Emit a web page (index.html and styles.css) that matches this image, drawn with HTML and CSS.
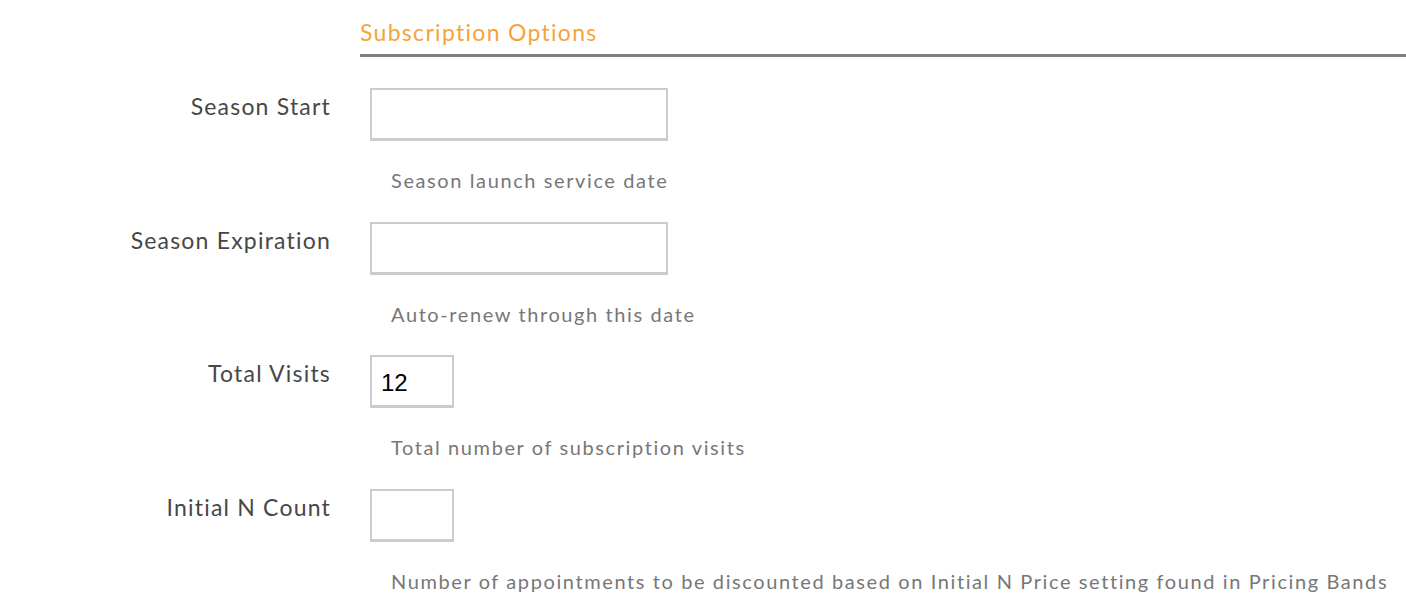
FILE: index.html
```html
<!DOCTYPE html>
<html lang="en">
<head>
<meta charset="utf-8">
<title>Subscription Options</title>
<link rel="stylesheet" href="styles.css">
</head>
<body>
<section class="section">
  <h2 class="section-title">Subscription Options</h2>
  <div class="form">
    <div class="row">
      <label class="label" for="start">Season Start</label>
      <div class="field">
        <input class="input wide" id="start" type="text">
        <p class="help">Season launch service date</p>
      </div>
    </div>
    <div class="row">
      <label class="label" for="exp">Season Expiration</label>
      <div class="field">
        <input class="input wide" id="exp" type="text">
        <p class="help">Auto-renew through this date</p>
      </div>
    </div>
    <div class="row">
      <label class="label" for="visits">Total Visits</label>
      <div class="field">
        <input class="input narrow" id="visits" type="text" value="12">
        <p class="help">Total number of subscription visits</p>
      </div>
    </div>
    <div class="row">
      <label class="label" for="ncount">Initial N Count</label>
      <div class="field">
        <input class="input narrow" id="ncount" type="text">
        <p class="help">Number of appointments to be discounted based on Initial N Price setting found in Pricing Bands</p>
      </div>
    </div>
  </div>
</section>
</body>
</html>
```
FILE: styles.css
```css
html, body {
  margin: 0;
  padding: 0;
  background: #ffffff;
}
body {
  font-family: "Lato", "Noto Sans", sans-serif;
  color: #4a4a4a;
}
.section {
  padding-top: 18px;
}
.section-title {
  margin: 0 0 0 360px;
  padding: 0 0 7px 0;
  font-size: 23px;
  line-height: 29px;
  font-weight: 400;
  letter-spacing: 1.3px;
  color: #f5a43a;
  border-bottom: 3px solid #808080;
}
.form {
  padding-top: 31px;
}
.row {
  display: grid;
  grid-template-columns: 330px 1fr;
  column-gap: 40px;
}
.label {
  text-align: right;
  font-size: 23px;
  line-height: 28px;
  letter-spacing: 1.2px;
  margin-right: -1px;
  padding-top: 4px;
  color: #474747;
}
.field {
  display: flex;
  flex-direction: column;
  align-items: flex-start;
}
.input {
  box-sizing: border-box;
  height: 53px;
  border: 2px solid #cccccc;
  border-bottom-width: 3px;
  background: #fff;
  font-family: "Liberation Sans", Arial, sans-serif;
  font-size: 24px;
  color: #000;
  padding: 3px 9px 0;
  margin: 0;
  outline: none;
}
.wide { width: 298px; }
.narrow { width: 84px; }
.help {
  margin: 27px 0 28px 21px;
  font-size: 20px;
  line-height: 25.5px;
  letter-spacing: 1.6px;
  color: #777777;
}
```
